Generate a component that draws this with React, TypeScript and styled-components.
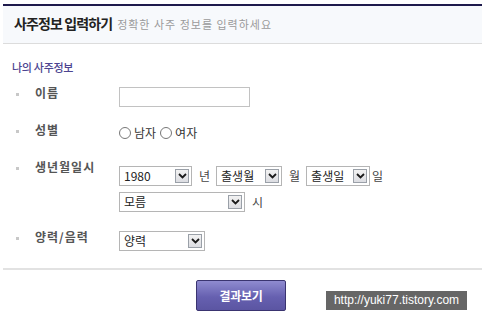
import styled, { createGlobalStyle } from "styled-components";

const GlobalStyle = createGlobalStyle`
  body {
    margin: 0;
    background: #ffffff;
    font-family: "Noto Sans CJK KR", "Noto Sans", sans-serif;
  }
`;

const Chevron = () => (
  <svg width="9" height="6" viewBox="0 0 9 6">
    <path d="M1 1 L4.5 4.5 L8 1" fill="none" stroke="#1a1a1a" strokeWidth="1.8" />
  </svg>
);

const FakeSelect = ({ value, width }: { value: string; width: number }) => (
  <SelectBox $width={width}>
    <SelectValue>{value}</SelectValue>
    <ArrowButton>
      <Chevron />
    </ArrowButton>
  </SelectBox>
);

const App = () => {
  return (
    <>
      <GlobalStyle />
      <Page>
        <Header>
          <HeaderTitle>사주정보 입력하기</HeaderTitle>
          <HeaderSub>정확한 사주 정보를 입력하세요</HeaderSub>
        </Header>

        <SectionTitle>나의 사주정보</SectionTitle>

        <Row $top={11}>
          <Bullet />
          <Label>이름</Label>
          <Field $offset={2}>
            <TextInput />
          </Field>
        </Row>

        <Row $top={15}>
          <Bullet />
          <Label>성별</Label>
          <Field $offset={1}>
            <InlineGroup>
              <Radio />
              <Plain>남자</Plain>
              <Radio />
              <Plain>여자</Plain>
            </InlineGroup>
          </Field>
        </Row>

        <Row $top={16}>
          <Bullet />
          <Label>생년월일시</Label>
          <Field $offset={7}>
            <InlineGroup>
              <FakeSelect value="1980" width={73} />
              <Unit>년</Unit>
              <FakeSelect value="출생월" width={66} />
              <Unit>월</Unit>
              <FakeSelect value="출생일" width={64} />
              <Unit $tight>일</Unit>
            </InlineGroup>
            <InlineGroup $top={6}>
              <FakeSelect value="모름" width={126} />
              <Unit>시</Unit>
            </InlineGroup>
          </Field>
        </Row>

        <Row $top={17}>
          <Bullet />
          <Label>양력/음력</Label>
          <Field $offset={2}>
            <FakeSelect value="양력" width={86} />
          </Field>
        </Row>

        <Divider />

        <Footer>
          <SubmitButton>결과보기</SubmitButton>
        </Footer>

        <Watermark>http://yuki77.tistory.com</Watermark>
      </Page>
    </>
  );
};

export default App;

const Page = styled.div`
  position: relative;
  width: 482px;
  height: 317px;
  padding: 4px 0 0 3px;
  box-sizing: border-box;
`;

const Header = styled.div`
  height: 34px;
  border-top: 2px solid #1e1a4c;
  border-bottom: 1px solid #dcdcdc;
  background: #f7f9fc;
  display: flex;
  align-items: center;
  padding: 0 0 3px 11px;
  box-sizing: content-box;
  gap: 5px;
`;

const HeaderTitle = styled.div`
  color: #222;
  font-size: 14px;
  font-weight: 700;
  letter-spacing: -0.9px;
`;

const HeaderSub = styled.div`
  color: #9a9a9a;
  font-size: 11px;
  letter-spacing: 1px;
  padding-top: 2px;
`;

const SectionTitle = styled.div`
  margin: 16px 0 0 9px;
  color: #4c4490;
  font-size: 11px;
  font-weight: 500;
  line-height: 14px;
  letter-spacing: -0.3px;
`;

const Row = styled.div<{ $top: number }>`
  display: grid;
  grid-template-columns: 19px 84px 1fr;
  padding-left: 13px;
  margin-top: ${({ $top }) => $top}px;
  align-items: start;
`;

const Bullet = styled.span`
  width: 3px;
  height: 3px;
  margin-top: 8px;
  background: #c8c8c8;
`;

const Label = styled.div`
  color: #555;
  font-size: 12px;
  font-weight: 700;
  line-height: 16px;
  letter-spacing: 1px;
`;

const Field = styled.div<{ $offset: number }>`
  margin-top: ${({ $offset }) => $offset}px;
  display: flex;
  flex-direction: column;
  align-items: flex-start;
`;

const TextInput = styled.div`
  width: 129px;
  height: 18px;
  border: 1px solid #c2c2c2;
  background: #fff;
`;

const InlineGroup = styled.div<{ $top?: number }>`
  display: flex;
  align-items: center;
  margin-top: ${({ $top }) => $top ?? 0}px;
  height: 20px;
`;

const Radio = styled.span`
  width: 10px;
  height: 10px;
  border: 1px solid #777;
  border-radius: 50%;
  background: #fff;
  margin-right: 3px;
`;

const Plain = styled.span`
  color: #333;
  font-size: 12px;
  line-height: 16px;
  margin-right: 4px;
`;

const Unit = styled.span<{ $tight?: boolean }>`
  color: #444;
  font-size: 12px;
  line-height: 16px;
  margin: ${({ $tight }) => ($tight ? "0 0 0 2px" : "0 6px 0 7px")};
`;

const SelectBox = styled.div<{ $width: number }>`
  width: ${({ $width }) => $width}px;
  height: 20px;
  box-sizing: border-box;
  border: 1px solid #b5b5b5;
  background: #fff;
  display: flex;
  align-items: center;
  justify-content: space-between;
  padding: 0 2px 0 4px;
`;

const SelectValue = styled.span`
  color: #222;
  font-size: 12px;
  line-height: 16px;
  white-space: nowrap;
`;

const ArrowButton = styled.span`
  width: 14px;
  height: 14px;
  box-sizing: border-box;
  border: 1px solid #9aa0a8;
  background: linear-gradient(#f2f2f2, #dcdde2);
  display: flex;
  align-items: center;
  justify-content: center;
`;

const Divider = styled.div`
  margin-top: 17px;
  height: 2px;
  background: #e2e2e2;
`;

const Footer = styled.div`
  display: flex;
  justify-content: center;
  padding-top: 10px;
  padding-right: 3px;
`;

const SubmitButton = styled.button`
  width: 90px;
  height: 31px;
  border: 1px solid #3a3470;
  border-radius: 2px;
  background: linear-gradient(#8f8bd0, #6660b0 55%, #5b55a2);
  color: #fff;
  font-family: "Noto Sans CJK KR", sans-serif;
  font-size: 12px;
  font-weight: 700;
  letter-spacing: -0.3px;
  cursor: pointer;
`;

const Watermark = styled.div`
  position: absolute;
  left: 326px;
  top: 291px;
  width: 141px;
  height: 19px;
  background: #666;
  color: #fff;
  font-family: "Liberation Sans", Arial, sans-serif;
  font-size: 12px;
  line-height: 19px;
  text-align: center;
  white-space: nowrap;
`;
